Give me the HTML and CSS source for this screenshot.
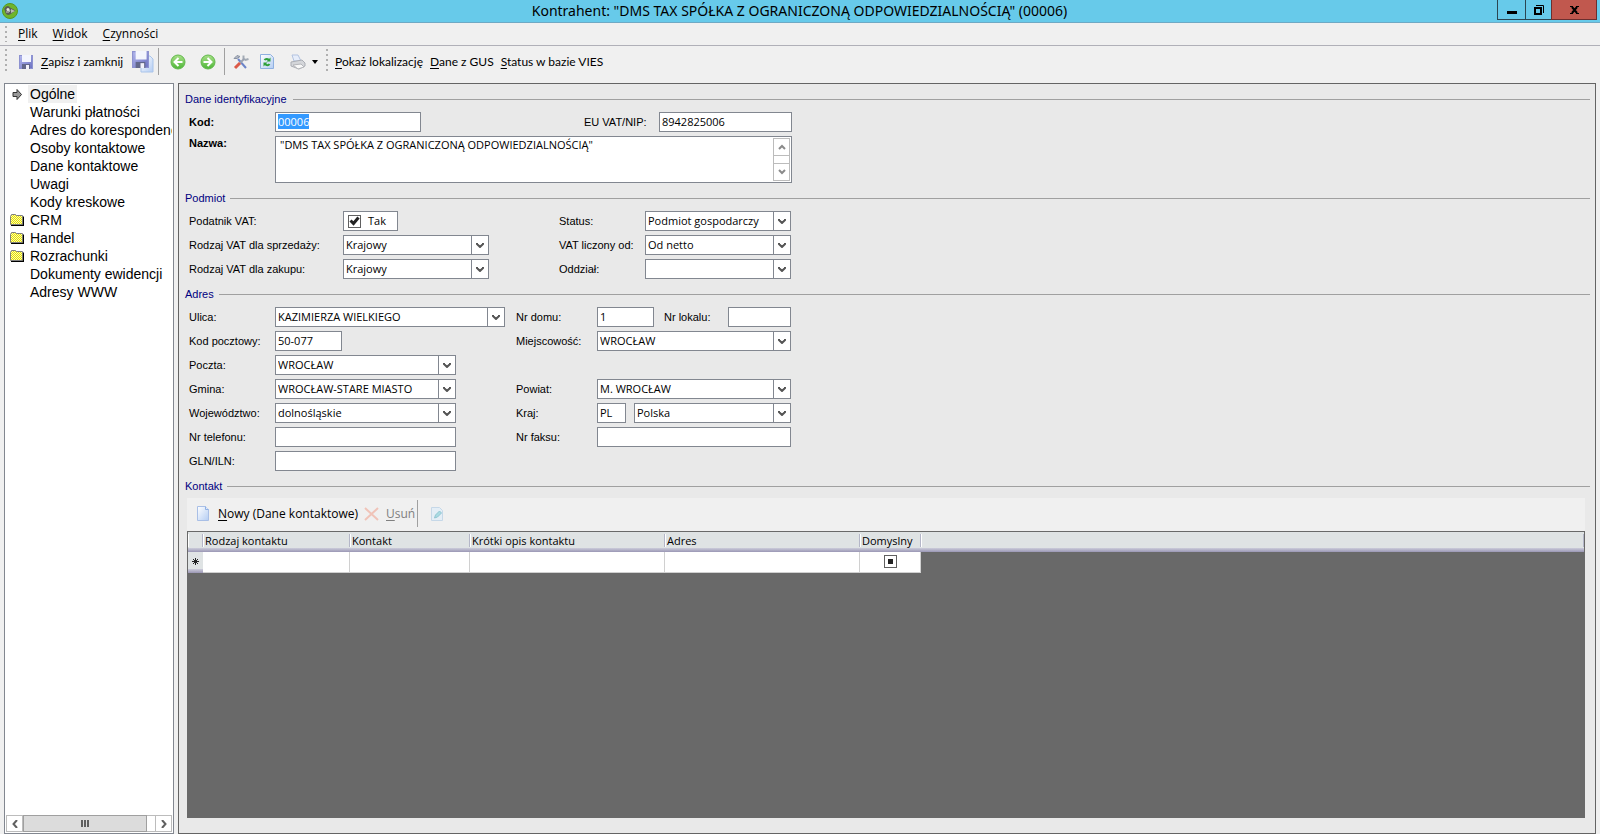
FILE: index.html
```html
<!DOCTYPE html>
<html lang="pl">
<head>
<meta charset="utf-8">
<title>Kontrahent: "DMS TAX SPÓŁKA Z OGRANICZONĄ ODPOWIEDZIALNOŚCIĄ" (00006)</title>
<link rel="stylesheet" href="styles.css">
</head>
<body>
<svg class="defs" aria-hidden="true">
  <defs>
    <linearGradient id="g-green" x1="0" y1="0" x2="0" y2="1"><stop offset="0" stop-color="#a8e088"/><stop offset="1" stop-color="#4db637"/></linearGradient>
    <linearGradient id="g-disk" x1="0" y1="0" x2="1" y2="1"><stop offset="0" stop-color="#b4b8ee"/><stop offset="1" stop-color="#6a70c0"/></linearGradient>
    <linearGradient id="g-page" x1="0" y1="0" x2="1" y2="1"><stop offset="0" stop-color="#ffffff"/><stop offset="1" stop-color="#b4cdf3"/></linearGradient>
    <pattern id="p-folder" width="2" height="2" patternUnits="userSpaceOnUse"><rect width="2" height="2" fill="#fafab0"/><rect width="1" height="1" fill="#e6e000"/><rect x="1" y="1" width="1" height="1" fill="#e6e000"/></pattern>
  </defs>
  <symbol id="chevron" viewBox="0 0 8 6"><path d="M1 1v1l3 3 3-3V1" fill="none" stroke="#555" stroke-width="2"/></symbol>
  <symbol id="thin-chevron" viewBox="0 0 8 6"><path d="M1 1l3 3 3-3" fill="none" stroke="#8a8a8a" stroke-width="2"/></symbol>
  <symbol id="folder" viewBox="0 0 14 12"><path d="M1 3l1-2h4l1 1h6l1 1v9H1z" fill="#000"/><path d="M.5 2.500l1-2h4l1 1h6v9H.5z" fill="url(#p-folder)" stroke="#808080"/></symbol>
  <symbol id="disk" viewBox="0 0 14 14"><rect x=".5" y=".5" width="13" height="13" fill="url(#g-disk)" stroke="#8d92d0"/><rect x="3" y="0" width="9" height="7" fill="#f3f5fd"/><rect x="3" y="9" width="8" height="5" fill="#62678a"/><rect x="7" y="10" width="3" height="4" fill="#f2f2fa"/></symbol>
</svg>

<header class="titlebar">
  <svg class="app-icon" viewBox="0 0 16 16"><circle cx="8" cy="8" r="7.500" fill="#6fb52c" stroke="#56991f"/><path d="M3 8a3 3 0 0 1 5-3.500l5.500 3L8 11.500A3.500 3.500 0 0 1 3 8z" fill="#5a5d58"/><circle cx="6" cy="6.500" r="1.500" fill="#e4e6e1"/><path d="M4 9h3l1-2" fill="none" stroke="#c9ccc5"/><path d="M9 6l4 2-4 2z" fill="#b9bdb4"/></svg>
  <h1 class="title">Kontrahent: "DMS TAX SPÓŁKA Z OGRANICZONĄ ODPOWIEDZIALNOŚCIĄ" (00006)</h1>
  <div class="window-buttons">
    <button class="win" aria-label="Minimalizuj"><svg width="10" height="10"><rect y="6" width="10" height="3"/></svg></button>
    <button class="win" aria-label="Przywróć"><svg width="10" height="10"><path d="M1 3h6v6H1z" fill="none" stroke="#000" stroke-width="2"/><path d="M2 .5h7.500V8" fill="none" stroke="#000"/></svg></button>
    <button class="win win-close" aria-label="Zamknij"><svg width="9" height="8"><path d="M0 .5h3M6 .5h3M0 7.500h3M6 7.500h3" stroke="#000"/><path d="M2 1l5 6M7 1L2 7" stroke="#000" stroke-width="2"/></svg></button>
  </div>
</header>

<nav class="menubar">
  <span class="grip"></span>
  <button class="menu"><u>P</u>lik</button>
  <button class="menu"><u>W</u>idok</button>
  <button class="menu"><u>C</u>zynności</button>
</nav>

<div class="toolbar" role="toolbar">
  <span class="grip"></span>
  <button class="tool tool-save"><svg width="14" height="14"><use href="#disk"/></svg><span><u>Z</u>apisz i zamknij</span></button>
  <button class="tool" aria-label="Zapisz kopię"><svg width="22" height="22"><path d="M9 5h9l3 3v13H9z" fill="url(#g-page)" stroke="#a9c4ea"/><use href="#disk" x="0" y="0" width="17" height="17"/></svg></button>
  <span class="separator"></span>
  <button class="tool tool-nav" aria-label="Wstecz"><svg width="16" height="16"><circle cx="8" cy="8" r="7" fill="url(#g-green)" stroke="#62b84c"/><path d="M12.500 8H5M8.500 4l-4 4 4 4" fill="none" stroke="#fff" stroke-width="2"/></svg></button>
  <button class="tool tool-nav" aria-label="Dalej"><svg width="16" height="16"><circle cx="8" cy="8" r="7" fill="url(#g-green)" stroke="#62b84c"/><path d="M3.500 8H11M7.500 4l4 4-4 4" fill="none" stroke="#fff" stroke-width="2"/></svg></button>
  <span class="separator"></span>
  <button class="tool tool-icon" aria-label="Narzędzia"><svg width="16" height="16"><path d="M1 4.500l3-3 3 1-3 2z" fill="#b4bac6" stroke="#8a93a3"/><path d="M5 5l8 9" stroke="#6c84c8" stroke-width="2"/><path d="M10.500 1.500v3l2 1.500 3-1" fill="none" stroke="#a3abb5" stroke-width="2"/><path d="M11 5L7 9" stroke="#9aa2b0" stroke-width="2"/><path d="M7 9l-5 5" stroke="#dc5a48" stroke-width="3"/></svg></button>
  <button class="tool tool-icon" aria-label="Odśwież"><svg width="14" height="15"><path d="M.5.5h10l3 3v11H.5z" fill="url(#g-page)" stroke="#8fb0e0"/><path d="M4.500 6c1-1.500 3-1.500 4.500 0" fill="none" stroke="#2fa03a" stroke-width="2"/><path d="M10.500 3.500v4h-4zM3.500 12.500v-4h4z" fill="#2fa03a"/><path d="M9.500 10c-1 1.500-3 1.500-4.500 0" fill="none" stroke="#2fa03a" stroke-width="2"/></svg></button>
  <button class="tool tool-print" aria-label="Drukuj"><svg width="16" height="16"><path d="M2 1h6l3 6H4z" fill="#e6edfa" stroke="#b3c3e0"/><path d="M1 8l11-2 3 3v3l-6 3-8-3z" fill="#d4d6da" stroke="#aaadb4"/><path d="M3 11l8-1 3 3-6 2z" fill="#f8f8f8" stroke="#b4b6ba"/></svg><svg width="6" height="4"><path d="M0 0h6L3 4z"/></svg></button>
  <span class="grip"></span>
  <button class="tool tool-text"><span><u>P</u>okaż lokalizację</span></button>
  <button class="tool tool-text"><span><u>D</u>ane z GUS</span></button>
  <button class="tool tool-text"><span><u>S</u>tatus w bazie VIES</span></button>
</div>

<div class="workspace">
  <aside class="sidebar">
    <ul class="tree">
      <li><span class="tree-icon"><svg width="10" height="11"><path d="M1 3.500h4v-3l4.500 5-4.500 5v-3H1z" fill="#999" stroke="#333"/></svg></span><a class="tree-link tree-link-active" href="#">Ogólne</a></li>
      <li><span class="tree-icon"></span><a class="tree-link" href="#">Warunki płatności</a></li>
      <li><span class="tree-icon"></span><a class="tree-link" href="#">Adres do korespondencji</a></li>
      <li><span class="tree-icon"></span><a class="tree-link" href="#">Osoby kontaktowe</a></li>
      <li><span class="tree-icon"></span><a class="tree-link" href="#">Dane kontaktowe</a></li>
      <li><span class="tree-icon"></span><a class="tree-link" href="#">Uwagi</a></li>
      <li><span class="tree-icon"></span><a class="tree-link" href="#">Kody kreskowe</a></li>
      <li><span class="tree-icon"><svg width="14" height="12"><use href="#folder"/></svg></span><a class="tree-link" href="#">CRM</a></li>
      <li><span class="tree-icon"><svg width="14" height="12"><use href="#folder"/></svg></span><a class="tree-link" href="#">Handel</a></li>
      <li><span class="tree-icon"><svg width="14" height="12"><use href="#folder"/></svg></span><a class="tree-link" href="#">Rozrachunki</a></li>
      <li><span class="tree-icon"></span><a class="tree-link" href="#">Dokumenty ewidencji</a></li>
      <li><span class="tree-icon"></span><a class="tree-link" href="#">Adresy WWW</a></li>
    </ul>
    <div class="hscroll">
      <button class="hscroll-btn" aria-label="Przewiń w lewo"><svg width="6" height="8"><path d="M5 0L1.500 4 5 8" fill="none" stroke="#606060" stroke-width="2"/></svg></button>
      <div class="hscroll-thumb"><svg width="8" height="7"><path d="M1 0v7M4 0v7M7 0v7" stroke="#606060" stroke-width="2"/></svg></div>
      <div class="hscroll-track"></div>
      <button class="hscroll-btn" aria-label="Przewiń w prawo"><svg width="6" height="8"><path d="M1 0l3.500 4L1 8" fill="none" stroke="#606060" stroke-width="2"/></svg></button>
    </div>
  </aside>

  <main class="panel">
    <section class="group">
      <h2 class="group-title group-title-wide">Dane identyfikacyjne</h2>
      <div class="fields fields-id">
        <label class="strong" for="kod">Kod:</label>
        <input class="box" id="kod" type="text" value="00006">
        <label class="second" for="nip">EU VAT/NIP:</label>
        <input class="box" id="nip" type="text" value="8942825006">
        <label class="strong label-top" for="nazwa">Nazwa:</label>
        <div class="memo">
          <textarea id="nazwa">"DMS TAX SPÓŁKA Z OGRANICZONĄ ODPOWIEDZIALNOŚCIĄ"</textarea>
          <div class="vscroll">
            <button class="vscroll-btn" aria-label="W górę"><svg class="flip" width="8" height="6"><use href="#thin-chevron"/></svg></button>
            <span class="vscroll-track"></span>
            <button class="vscroll-btn" aria-label="W dół"><svg width="8" height="6"><use href="#thin-chevron"/></svg></button>
          </div>
        </div>
      </div>
    </section>

    <section class="group">
      <h2 class="group-title">Podmiot</h2>
      <div class="fields fields-entity">
        <label for="podatnik">Podatnik VAT:</label>
        <label class="checkbox-box"><input class="check" id="podatnik" type="checkbox" checked><svg class="tick" width="11" height="10"><path d="M1.500 4.500l3 3 5-6" fill="none" stroke="#222" stroke-width="3"/></svg><span>Tak</span></label>
        <label class="second" for="status">Status:</label>
        <div class="combo"><select id="status"><option>Podmiot gospodarczy</option></select><span class="combo-btn"><svg width="8" height="6"><use href="#chevron"/></svg></span></div>
        <label for="vat-s">Rodzaj VAT dla sprzedaży:</label>
        <div class="combo"><select id="vat-s"><option>Krajowy</option></select><span class="combo-btn"><svg width="8" height="6"><use href="#chevron"/></svg></span></div>
        <label class="second" for="vat-od">VAT liczony od:</label>
        <div class="combo"><select id="vat-od"><option>Od netto</option></select><span class="combo-btn"><svg width="8" height="6"><use href="#chevron"/></svg></span></div>
        <label for="vat-z">Rodzaj VAT dla zakupu:</label>
        <div class="combo"><select id="vat-z"><option>Krajowy</option></select><span class="combo-btn"><svg width="8" height="6"><use href="#chevron"/></svg></span></div>
        <label class="second" for="oddzial">Oddział:</label>
        <div class="combo"><select id="oddzial"><option></option></select><span class="combo-btn"><svg width="8" height="6"><use href="#chevron"/></svg></span></div>
      </div>
    </section>

    <section class="group">
      <h2 class="group-title">Adres</h2>
      <div class="fields fields-address">
        <label for="ulica">Ulica:</label>
        <div class="combo"><select id="ulica"><option>KAZIMIERZA WIELKIEGO</option></select><span class="combo-btn"><svg width="8" height="6"><use href="#chevron"/></svg></span></div>
        <label class="second" for="dom">Nr domu:</label>
        <div class="pair pair-house">
          <input class="box house" id="dom" type="text" value="1">
          <label class="flat-label" for="lokal">Nr lokalu:</label>
          <input class="box flat" id="lokal" type="text">
        </div>
        <label for="kod-p">Kod pocztowy:</label>
        <input class="box postcode" id="kod-p" type="text" value="50-077">
        <label class="second" for="miejsc">Miejscowość:</label>
        <div class="combo"><select id="miejsc"><option>WROCŁAW</option></select><span class="combo-btn"><svg width="8" height="6"><use href="#chevron"/></svg></span></div>
        <label for="poczta">Poczta:</label>
        <div class="combo medium"><select id="poczta"><option>WROCŁAW</option></select><span class="combo-btn"><svg width="8" height="6"><use href="#chevron"/></svg></span></div>
        <label for="gmina">Gmina:</label>
        <div class="combo medium"><select id="gmina"><option>WROCŁAW-STARE MIASTO</option></select><span class="combo-btn"><svg width="8" height="6"><use href="#chevron"/></svg></span></div>
        <label class="second" for="powiat">Powiat:</label>
        <div class="combo"><select id="powiat"><option>M. WROCŁAW</option></select><span class="combo-btn"><svg width="8" height="6"><use href="#chevron"/></svg></span></div>
        <label for="woj">Województwo:</label>
        <div class="combo medium"><select id="woj"><option>dolnośląskie</option></select><span class="combo-btn"><svg width="8" height="6"><use href="#chevron"/></svg></span></div>
        <label class="second" for="kraj">Kraj:</label>
        <div class="pair pair-country">
          <input class="box code" id="kraj" type="text" value="PL">
          <div class="combo"><select aria-label="Kraj"><option>Polska</option></select><span class="combo-btn"><svg width="8" height="6"><use href="#chevron"/></svg></span></div>
        </div>
        <label for="tel">Nr telefonu:</label>
        <input class="box medium" id="tel" type="text">
        <label class="second" for="faks">Nr faksu:</label>
        <input class="box" id="faks" type="text">
        <label for="gln">GLN/ILN:</label>
        <input class="box medium" id="gln" type="text">
      </div>
    </section>

    <section class="group group-contact">
      <h2 class="group-title">Kontakt</h2>
      <div class="contact">
        <div class="contact-bar" role="toolbar">
          <button class="tool contact-new"><svg width="12" height="15"><path d="M.5.5h8l3 3v11H.5z" fill="url(#g-page)" stroke="#a9bfe6"/><path d="M8.500.5v3h3" fill="#dfe9fa" stroke="#8fb0e4"/></svg><span><u>N</u>owy (Dane kontaktowe)</span></button>
          <button class="tool contact-del" disabled><svg width="15" height="14"><path d="M1 1l13 12M14 1L1 13" stroke="#f0c3b8" stroke-width="2"/></svg><span><u>U</u>suń</span></button>
          <span class="separator"></span>
          <button class="tool contact-edit" disabled aria-label="Edytuj"><svg width="12" height="14"><path d="M.5.5h8l3 3v10H.5z" fill="#e4eef6" stroke="#c6d8e8"/><path d="M3.500 11l1-3 4-4 2 2-4 4z" fill="#a9dbe2" stroke="#92c6d2"/></svg></button>
        </div>
        <div class="grid">
          <table>
            <colgroup><col class="c-mark"><col class="c-kind"><col class="c-contact"><col class="c-wide"><col class="c-wide"><col class="c-default"><col></colgroup>
            <thead><tr><th></th><th>Rodzaj kontaktu</th><th>Kontakt</th><th>Krótki opis kontaktu</th><th>Adres</th><th>Domyslny</th><th></th></tr></thead>
            <tbody><tr>
              <td class="marker"><svg width="7" height="7"><path d="M3.500 0v7M0 3.500h7M1 1l5 5M6 1L1 6" stroke="#222"/></svg></td>
              <td></td><td></td><td></td><td></td>
              <td class="default-cell"><input class="check check-mixed" type="checkbox" aria-label="Domyslny"></td>
              <td class="void"></td>
            </tr></tbody>
          </table>
        </div>
      </div>
    </section>
  </main>
</div>
<script src="script.js"></script>
</body>
</html>
```
FILE: styles.css
```css
* { box-sizing: border-box; }

body {
  margin: 0;
  min-height: 100vh;
  display: flex;
  flex-direction: column;
  background: #f0f0f0;
  color: #000;
  font: 11px/14px "Open Sans", sans-serif;
}

button, input, select, textarea { font: inherit; color: inherit; margin: 0; border-radius: 0; }
button { background: none; border: 0; padding: 0; white-space: nowrap; }
svg { display: block; flex: none; }
u { text-underline-offset: 2px; }
.defs { position: absolute; width: 0; height: 0; }

/* Title bar */
.titlebar {
  display: grid;
  grid-template-columns: 100px 1fr 100px;
  height: 23px;
  padding: 0 3px 0 2px;
  background: #67caea;
  border-bottom: 1px solid #6fa9c4;
}
.app-icon { width: 16px; height: 16px; margin-top: 3px; }
.title { margin: 0; font: 14px/22px "Noto Sans", sans-serif; text-align: center; white-space: nowrap; }
.window-buttons { display: flex; height: 20px; }
.win {
  display: flex;
  align-items: center;
  justify-content: center;
  width: 28px;
  flex: 1 0 auto;
  border: 1px solid #2b4652;
  border-top: 0;
  border-right: 0;
}
.win:nth-child(2) { width: 26px; }
.win-close { width: 46px; background: #c1584e; border: 1px solid #6b2f2f; border-top: 0; }

/* Menu and toolbar */
.menubar, .toolbar { display: flex; align-items: center; font: 12px/16px "Open Sans", sans-serif; }
.menubar { height: 23px; padding-left: 5px; gap: 15px; border-bottom: 1px solid #b0b0b8; }
.toolbar { height: 37px; padding: 0 5px 6px; font-family: Lato, sans-serif; }
.grip { width: 2px; align-self: stretch; margin: 3px 0; background: repeating-linear-gradient(#b0b0b0 0 2px, transparent 2px 5px); }
.menubar .grip { margin-right: -4px; }
.tool { display: flex; align-items: center; }
.tool-save { gap: 8px; margin-left: 12px; width: 113px; }
.separator { width: 1px; align-self: stretch; margin: 2px 0; background: #a0a0a0; }
.toolbar .separator { margin-left: 4px; }
.tool-nav { padding: 0 3px 0 11px; }
.tool-nav + .separator { margin-left: 5px; }
.tool-icon { margin-left: 8px; }
.tool-icon + .tool-icon { margin-left: 11px; }
.tool-print { margin: 0 8px 0 16px; gap: 6px; }
.tool-text { margin-left: 7px; }

/* Sidebar */
.workspace { flex: 1; display: flex; gap: 4px; padding: 0 4px 0 4px; }
.sidebar {
  width: 170px;
  flex: none;
  display: flex;
  flex-direction: column;
  padding: 1px;
  background: #fff;
  border: 1px solid #828790;
}
.tree { list-style: none; margin: 0; padding: 0; flex: 1; overflow: hidden; font: 14px/18px "Liberation Sans", Arial, sans-serif; }
.tree li { display: flex; height: 18px; }
.tree-icon { display: flex; align-items: center; justify-content: center; width: 22px; flex: none; }
.tree-link { padding: 0 2px; color: #000; text-decoration: none; white-space: nowrap; }
.tree-link-active { background: #f0f0f0; }
.hscroll { display: flex; height: 17px; }
.hscroll-btn, .hscroll-thumb, .hscroll-track { display: flex; align-items: center; justify-content: center; border: 1px solid #bcbcbc; }
.hscroll-btn { width: 17px; }
.hscroll-thumb { flex: 1; background: #dcdcdc; border-color: #a0a0a0; }
.hscroll-track { width: 8px; border-width: 1px 0; }

/* Main panel */
.panel {
  flex: 1;
  min-width: 0;
  display: flex;
  flex-direction: column;
  gap: 8px;
  padding: 8px 5px 15px 6px;
  background: #e9e9e9;
  border: 1px solid #646464;
}
.group-title {
  display: flex;
  align-items: center;
  gap: 5px;
  margin: 0 0 6px;
  font: 11px/14px "Liberation Sans", Arial, sans-serif;
  color: #000080;
}
.group-title::after { content: ""; flex: 1; height: 1px; background: #a0a0a0; }
.group-title-wide { gap: 6px; }
.fields { display: grid; row-gap: 4px; padding-left: 4px; }
.fields-id { grid-template-columns: 86px 146px 163px 75px 133px; }
.fields-id .second { grid-column: 4; }
.fields-entity { grid-template-columns: 154px 146px 70px 86px 146px; }
.fields-entity .second { grid-column: 4; }
.fields-address { grid-template-columns: 86px 230px 11px 81px 194px; }
.fields-address .second { grid-column: 4; }
.fields > label:not(.second) { grid-column-start: 1; }
.fields > .checkbox-box { grid-column-start: 2 !important; }
label { font: 11px/20px "Liberation Sans", Arial, sans-serif; white-space: nowrap; }
.strong { font-weight: bold; }
.label-top { line-height: 14px; }

.box { width: 100%; height: 20px; padding: 0 2px 2px; background: #fff; border: 1px solid #828790; outline: 0; }
.box::selection { background: #3399ff; color: #fff; }
.medium { width: 181px; }
.postcode { width: 67px; }
.house { width: 57px; }
.flat { width: 63px; }
.code { width: 29px; }
.pair { display: flex; }
.flat-label { flex: 1; padding-left: 10px; }
.pair-country { gap: 8px; }
.pair-country .combo { flex: 1; }

.combo { display: grid; grid-template-columns: 1fr 17px; height: 20px; background: #fff; border: 1px solid #828790; }
.combo select { grid-area: 1 / 1 / 2 / 3; width: 100%; appearance: none; border: 0; padding: 0 18px 0 2px; background: none; outline: 0; }
.combo-btn { grid-area: 1 / 2; display: flex; align-items: center; justify-content: center; border-left: 1px solid #828790; pointer-events: none; }

.memo { grid-column: 2 / -1; display: flex; height: 47px; padding: 1px; background: #fff; border: 1px solid #828790; }
.memo textarea { flex: 1; border: 0; padding: 0 3px; resize: none; overflow: hidden; outline: 0; background: none; }
.vscroll { display: flex; flex-direction: column; width: 17px; border: 1px solid #bcbcbc; }
.vscroll-btn { display: flex; align-items: center; justify-content: center; height: 16px; }
.vscroll-track { flex: 1; border: solid #bcbcbc; border-width: 1px 0; }
.flip { transform: scaleY(-1); }

.checkbox-box { display: grid; grid-template-columns: 13px 1fr; column-gap: 7px; align-items: center; width: 55px; height: 20px; padding-left: 4px; background: #fff; border: 1px solid #828790; font: 11px/14px "Open Sans", sans-serif; }
.check { appearance: none; width: 13px; height: 13px; background: #fff; border: 1px solid #606060; display: block; }
.checkbox-box .check, .tick { grid-area: 1 / 1; }
.tick { justify-self: center; pointer-events: none; }
.check-mixed { margin: 0 auto; padding: 3px; background: #222 content-box; }

/* Contacts */
.group-contact { flex: 1; display: flex; flex-direction: column; }
.group-contact .group-title { margin-bottom: 5px; }
.contact { flex: 1; display: flex; flex-direction: column; margin: 0 5px 0 2px; }
.contact-bar { display: flex; align-items: center; height: 33px; padding: 0 10px 2px; background: #f0f0f0; font: 12px/16px "Open Sans", sans-serif; }
.contact-new { gap: 9px; width: 167px; }
.contact-del { gap: 7px; width: 53px; color: #808080; }
.contact-edit { margin-left: 13px; }
.grid { flex: 1; background: #696969; border: 1px solid #696969; }
table { width: 100%; table-layout: fixed; border-collapse: separate; border-spacing: 0; }
.c-mark { width: 15px; }
.c-kind { width: 147px; }
.c-contact { width: 120px; }
.c-wide { width: 195px; }
.c-default { width: 61px; }
th {
  height: 20px;
  padding: 0 2px 3px;
  text-align: left;
  font-weight: normal;
  white-space: nowrap;
  background:
    linear-gradient(#ccccda, #9a96b4) bottom / 100% 4px no-repeat,
    linear-gradient(#b4b6c8, #b4b6c8) right 2px / 1px 13px no-repeat,
    linear-gradient(#fff, #fff) left 2px / 1px 13px no-repeat,
    #dfe3e4;
}
td { height: 21px; padding: 0 0 2px; background: #fff; border: solid #d0d0d0; border-width: 0 1px 1px 0; }
.marker { padding-left: 4px; border: 0; background: linear-gradient(#ccccda, #9a96b4) bottom / 100% 4px no-repeat, #dfe3e4; }
.void { background: none; border: 0; }
```
FILE: script.js
```js
const code = document.getElementById("kod");
code.focus();
code.select();
document.querySelector(".check-mixed").indeterminate = true;
```
